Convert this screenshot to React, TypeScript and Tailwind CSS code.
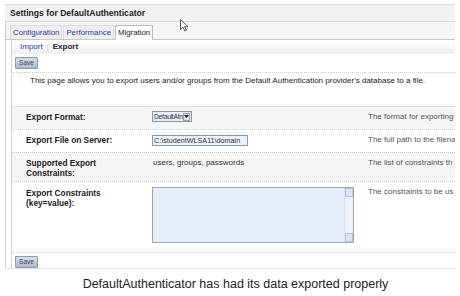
import React from "react";

const SaveButton = () => (
  <button className="h-[12px] w-[23px] border border-[#8a9bb4] bg-gradient-to-b from-[#d6e0ec] to-[#a9bad0] text-[6.5px] leading-[10px] text-[#445] rounded-[1px]">
    Save
  </button>
);

function Row({
  label,
  value,
  desc,
  gray,
  h,
}: {
  label: React.ReactNode;
  value: React.ReactNode;
  desc: string;
  gray?: boolean;
  h: string;
}) {
  return (
    <div className={`flex items-start border-t border-dotted border-[#cfcfcf] pt-[5px] ${h} ${gray ? "bg-[#f5f5f5]" : "bg-white"}`}>
      <div className="w-[141px] shrink-0 pl-[14px] font-bold text-[8.3px] text-[#222] leading-[10px]">{label}</div>
      <div className="w-[215px] shrink-0 leading-[10px] text-[#333]">{value}</div>
      <div className="whitespace-nowrap leading-[10px] text-[#555]">{desc}</div>
    </div>
  );
}

export default function App() {
  return (
    <div className="w-[460px] h-[296px] bg-white relative overflow-hidden font-['Liberation_Sans',Arial,sans-serif] text-[8px]">
      {/* Settings panel */}
      <div className="ml-[5px] w-[450px] pt-[4px] overflow-hidden">
        <div className="h-[18px] border-t border-b border-[#d8d8d8] bg-[#f2f2f2] pl-[5px] flex items-center font-bold text-[8.6px] text-[#222]">
          Settings for DefaultAuthenticator
        </div>
        <div className="border-l border-[#d4d4d4]">
          {/* Tabs */}
          <div className="h-[18px] bg-[#f5f5f5] flex items-end pl-[4px] gap-[1px] border-b border-[#c8c8c8]">
            <div className="h-[14px] px-[2px] flex items-center border border-b-0 border-[#dcdcdc] bg-[#eeeeee] text-[#2a3aa8] text-[7.8px]">Configuration</div>
            <div className="h-[14px] px-[2px] flex items-center border border-b-0 border-[#dcdcdc] bg-[#eeeeee] text-[#2a3aa8] text-[7.8px]">Performance</div>
            <div className="h-[15px] px-[2px] -mb-px flex items-center border border-b-0 border-[#bdbdbd] bg-white text-[#222] text-[7.8px]">Migration</div>
          </div>
          <div className="ml-[5px] border-l border-[#d4d4d4]">
            {/* Sub tabs */}
            <div className="h-[14px] flex items-center pl-[8px] bg-gradient-to-b from-white to-[#efefef] text-[8px]">
              <span className="text-[#2a3aa8]">Import</span>
              <span className="mx-[4px] text-[#bbb]">|</span>
              <span className="font-bold text-[#222]">Export</span>
            </div>
            <div className="pl-[3px] pt-[3px]">
              <SaveButton />
            </div>
            <div className="mt-[3px] border-t border-dotted border-[#cfcfcf] h-[34px] pl-[18px] pt-[3px] leading-[10px] text-[#222] whitespace-nowrap">
              This page allows you to export users and/or groups from the Default Authentication provider's database to a file.
            </div>
            <Row
              gray
              h="h-[23px]"
              label="Export Format:"
              value={
                <div className="-mt-[1px] ml-[-1px] w-[40px] h-[11px] flex items-center border border-[#8898b0] bg-[#e8eefa]">
                  <span className="flex-1 pl-[1px] text-[6.8px] tracking-[-0.3px] leading-[9px] text-[#333] whitespace-nowrap">DefaultAtn</span>
                  <span className="w-[7px] h-[8px] mr-[1px] shrink-0 border border-[#a0a0a0] bg-[#e6e6e6] flex items-center justify-center">
                    <svg width="5" height="3" viewBox="0 0 5 3"><path d="M0 0h5L2.5 3z" fill="#222" /></svg>
                  </span>
                </div>
              }
              desc="The format for exporting"
            />
            <Row
              h="h-[23px]"
              label="Export File on Server:"
              value={
                <div className="ml-[-1px] w-[96px] h-[11px] border border-[#7f9db9] bg-[#eef2fb] pl-[1px] text-[7.2px] leading-[9px] text-[#333] whitespace-nowrap overflow-hidden">
                  C:\studentWLSA11\domain
                </div>
              }
              desc="The full path to the filena"
            />
            <Row
              gray
              h="h-[29px]"
              label={
                <>
                  Supported Export
                  <br />
                  Constraints:
                </>
              }
              value="users, groups, passwords"
              desc="The list of constraints th"
            />
            <Row
              h="h-[71px]"
              label={
                <>
                  <div className="pt-[1px]">Export Constraints</div>
                  <div>(key=value):</div>
                </>
              }
              value={
                <div className="ml-[-1px] w-[202px] h-[56px] flex border border-[#9aa6bd] bg-[#e6eefb]">
                  <div className="flex-1" />
                  <div className="w-[9px] flex flex-col justify-between bg-[#eef2f8] border-l border-[#dde3ee]">
                    <div className="h-[9px] bg-[#dbe4f2] border border-[#b4c2d8]" />
                    <div className="h-[9px] bg-[#dbe4f2] border border-[#b4c2d8]" />
                  </div>
                </div>
              }
              desc="The constraints to be us"
            />
            <div className="border-t border-dotted border-[#cfcfcf] pl-[3px] pt-[3px] h-[16px]">
              <SaveButton />
            </div>
          </div>
        </div>
        <div className="border-t border-[#e4e4e4]" />
      </div>

      {/* Caption */}
      <div className="mt-[8px] pl-[11px] text-center text-[12.5px] leading-[14px] text-[#222]">
        DefaultAuthenticator has had its data exported properly
      </div>

      {/* Mouse cursor */}
      <svg className="absolute left-[180px] top-[19px]" width="9" height="13" viewBox="0 0 9 13">
        <path d="M0.5 0.5V10.5L3 8.2L4.8 12L6.4 11.3L4.6 7.6H8Z" fill="#fff" stroke="#333" strokeWidth="0.8" strokeLinejoin="round" />
      </svg>
    </div>
  );
}
